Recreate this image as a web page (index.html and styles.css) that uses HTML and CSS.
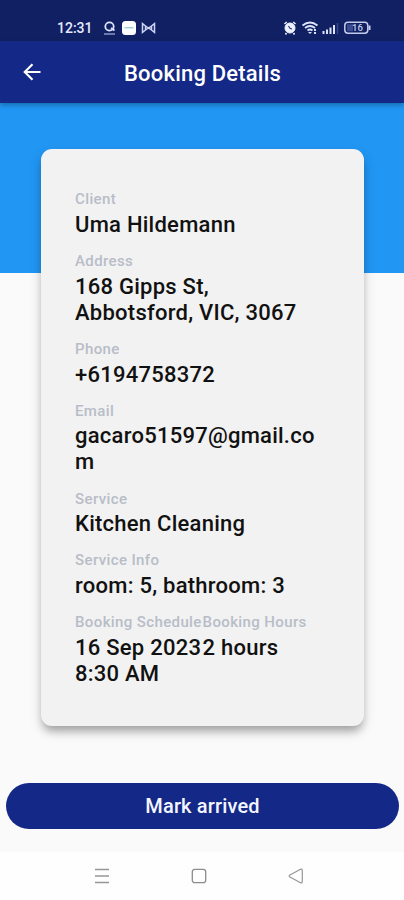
FILE: index.html
```html
<!DOCTYPE html>
<html lang="en">
<head>
<meta charset="utf-8">
<title>Booking Details</title>
<link rel="stylesheet" href="styles.css">
</head>
<body>
<div class="status">
  <span class="clock">12:31</span>
  <svg class="status-left" width="54" height="16" viewBox="0 0 54 16">
    <g fill="none" stroke="#dfe5fb" stroke-width="1.8"><circle cx="6.5" cy="6.500" r="4.2"/><path d="M8 8l3.500 2.500"/><path d="M1 14h11" stroke-width="1.2" stroke="#aab4df"/></g>
    <rect x="19" y="1" width="14" height="14" rx="3.500" fill="#fff"/>
    <path d="M21.500 7.700h9" stroke="#9fd0d8" stroke-width="1.500"/>
    <path d="M39.500 3.500l3 2.500v4l-3 2.500zM51.500 3.500l-3 2.500v4l3 2.500zM42.500 6l3 2 3-2M42.500 10l3-2 3 2" fill="none" stroke="#ccd5f5" stroke-width="1.500"/>
  </svg>
  <svg class="status-right" width="90" height="16" viewBox="0 0 90 16">
    <g stroke="#eef2ff" fill="none"><path d="M3.500 4l2.300-2M14.500 4l-2.300-2M5.500 13l-1 1.500M12.500 13l1 1.500" stroke-width="1.600"/><circle cx="9" cy="8" r="5" fill="#eef2ff"/><path d="M7.500 6l1.700 2.500L11 9" stroke="#18266f" stroke-width="1.100"/></g>
    <g stroke="#dce3fa" fill="none" stroke-width="1.700"><path d="M21.500 5.500q7.500-6 15 0M24 8q5-4 10 0M26.500 10.500q2.500-2 5 0"/></g>
    <path d="M29 14l-2-2h4zM33 9h2v2h-2zM33 12h2v2h-2z" fill="#dce3fa"/>
    <path d="M41.500 11h2v3h-2zM45 9.500h2V14h-2zM48.500 7.500h2V14h-2zM52 5h2v9h-2z" fill="#dce3fa"/>
    <path d="M56.500 3v11" stroke="#39478d" stroke-width="1.500"/>
    <rect x="63.800" y="2.300" width="23" height="11" rx="3.200" fill="none" stroke="#c3ccec" stroke-width="1.500"/>
    <path d="M66 4.300h6v7h-6z" fill="#3c4a91"/><path d="M88.500 5.500V10" stroke="#c3ccec" stroke-width="2"/>
    <text x="71" y="11.300" class="battery">16</text>
  </svg>
</div>
<header class="bar">
  <svg class="back" width="18" height="18" viewBox="0 0 18 18" fill="none" stroke="#fff" stroke-width="2.100"><path d="M17.500 9H2M9.500 1.200L1.700 9l7.800 7.800"/></svg>
  <h1>Booking Details</h1>
</header>
<main>
  <section class="card">
    <div class="field"><div class="label">Client</div><div class="value">Uma Hildemann</div></div>
    <div class="field"><div class="label">Address</div><div class="value">168 Gipps St,<br>Abbotsford, VIC, 3067</div></div>
    <div class="field"><div class="label">Phone</div><div class="value">+6194758372</div></div>
    <div class="field"><div class="label">Email</div><div class="value">gacaro51597@gmail.co<br>m</div></div>
    <div class="field"><div class="label">Service</div><div class="value">Kitchen Cleaning</div></div>
    <div class="field"><div class="label">Service Info</div><div class="value">room: 5, bathroom: 3</div></div>
    <div class="pair">
      <div class="field"><div class="label">Booking Schedule</div><div class="value">16 Sep 2023<br>8:30 AM</div></div>
      <div class="field"><div class="label">Booking Hours</div><div class="value">2 hours</div></div>
    </div>
  </section>
  <button class="arrived">Mark arrived</button>
</main>
<nav class="nav">
  <svg width="16" height="16" viewBox="0 0 16 16" fill="none" stroke="#969696" stroke-width="1.300"><path d="M1 1.500h14M1 8h14M1 14.500h14"/></svg>
  <svg width="16" height="16" viewBox="0 0 16 16" fill="none" stroke="#8c8c8c" stroke-width="1.300"><rect x="1.300" y="1.300" width="13.400" height="13.400" rx="2.500"/></svg>
  <svg width="16" height="16" viewBox="0 0 16 16" fill="none" stroke="#969696" stroke-width="1.200" stroke-linejoin="round"><path d="M1.500 7.200L12.500 1.300Q14.300 .8 14.300 2.500v11q0 1.700-1.800 1.200L1.500 8.800Q.8 8 1.500 7.200z"/></svg>
</nav>
</body>
</html>
```
FILE: styles.css
```css
* { box-sizing: border-box; }
body {
  margin: 0;
  width: 404px;
  height: 900px;
  overflow: hidden;
  display: flex;
  flex-direction: column;
  background: #fafafa;
  font-family: Roboto, "Liberation Sans", sans-serif;
  font-weight: 500;
}
.status {
  height: 41px;
  background: #112062;
  display: flex;
  align-items: center;
  padding: 14px 33px 0 57px;
}
.clock { font-size: 14px; line-height: 16px; margin-top: 1px; color: #e6ebff; width: 46px; }
.status-right { margin-left: auto; }
.battery { font-size: 9.5px; fill: #c3ccec; }
.bar {
  height: 62px;
  background: #142987;
  display: flex;
  align-items: center;
  padding: 0 23px;
  position: relative;
  box-shadow: 0 2px 5px rgba(0, 0, 0, .3);
}
.bar h1 {
  margin: 3px 0 0 83px;
  font-size: 22px;
  line-height: 26px;
  font-weight: 500;
  letter-spacing: .2px;
  color: #fff;
  white-space: nowrap;
}
main {
  flex: 1;
  display: flex;
  flex-direction: column;
  padding: 46px 5px 0 6px;
  background: linear-gradient(#2196f3 170px, #fafafa 170px);
}
.card {
  width: 323px;
  height: 577px;
  margin-left: 35px;
  padding: 41.4px 34px 0;
  background: #f2f2f2;
  border-radius: 11px;
  box-shadow: 0 7px 9px -2px rgba(0, 0, 0, .28), 0 5px 14px rgba(0, 0, 0, .12);
}
.field { margin-bottom: 14.2px; white-space: nowrap; }
.label { font-size: 15px; line-height: 18px; margin-bottom: 3.6px; color: #b8bdc8; letter-spacing: .38px; }
.value { font-size: 22px; line-height: 26px; color: #111; letter-spacing: .25px; }
.pair { display: flex; gap: .8px; }
.arrived {
  height: 46px;
  margin-top: 57px;
  padding: 0;
  border: 0;
  border-radius: 23px;
  background: #142987;
  color: #f4f6ff;
  font: 500 20px/24px Roboto, sans-serif;
  letter-spacing: .15px;
}
.nav {
  height: 48px;
  background: #fefefe;
  display: flex;
  gap: 81px;
  padding: 16px 0 0 94px;
}
```
